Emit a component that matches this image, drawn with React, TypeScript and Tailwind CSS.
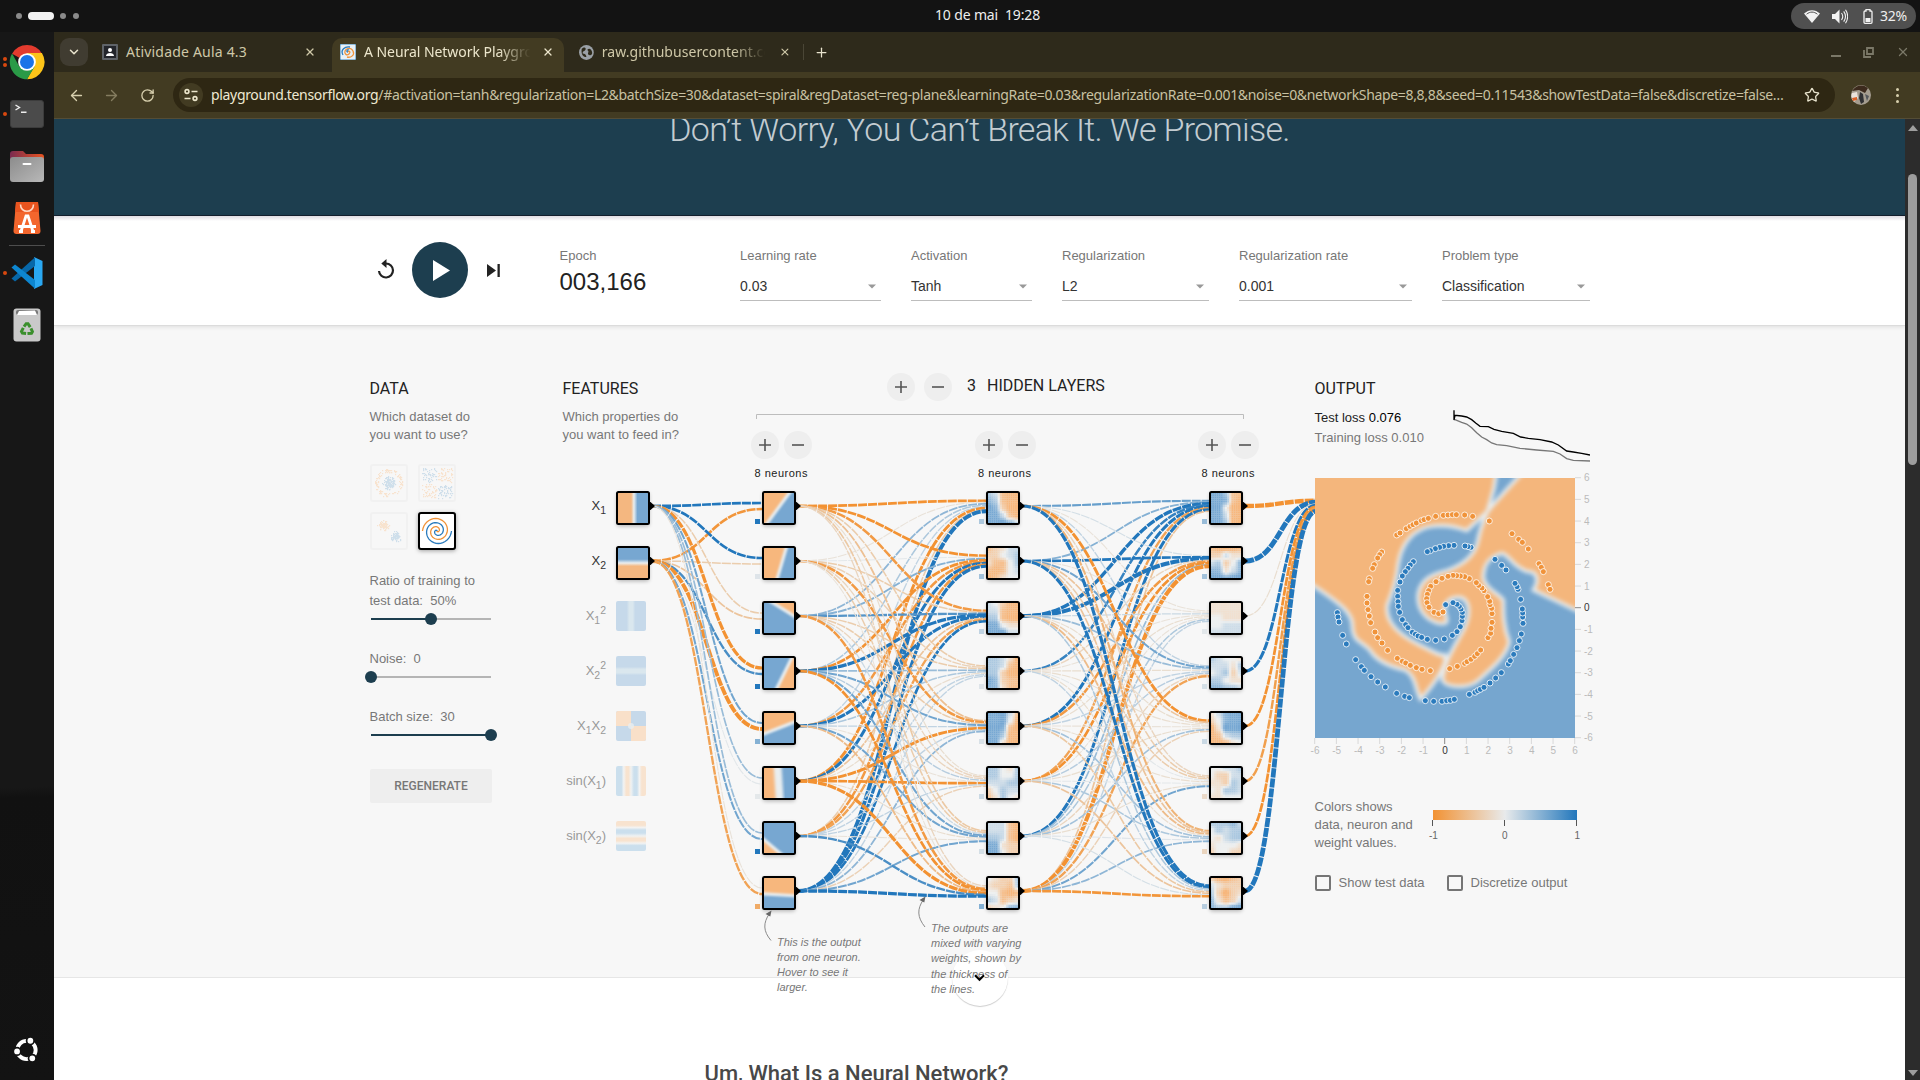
import React from "react";
import { ArrowLeft, ArrowRight, ChevronDown, Plus, RotateCw, Star, X } from "lucide-react";

const ORANGE = "#f4b780";
const BLUE = "#77a7d1";
const MID = "#e9eef0";

function mix(a: number[], b: number[], t: number) {
  return `rgb(${a.map((v, i) => Math.round(v + (b[i] - v) * t)).join(",")})`;
}
function linkColor(w: number) {
  const t = Math.min(1, Math.abs(w));
  return w < 0 ? mix([232, 230, 226], [243, 146, 50], t) : mix([232, 234, 235], [34, 119, 188], t);
}
function heatColor(d: number) {
  return d < 4 ? mix([238, 240, 240], [247, 183, 125], (4 - d) / 4) : mix([238, 240, 240], [119, 168, 211], (d - 4) / 4);
}

const ROW = (i: number) => 506 + 55 * i;
const COLS = [631, 777, 1001, 1224];

const W1 = [
  [1, 1, -0.3, -1.3, 0.6, 0.4, 0.4, -0.05],
  [-0.95, -0.3, -0.4, 0.8, -1.7, 0.03, 0.6, -0.8],
];
const W2 = [
  [-1, -1, -0.9, -0.3, -0.45, -0.1, -0.35, -0.2],
  [-0.05, 0.02, -0.3, -0.25, -0.9, -0.2, -0.3, -0.05],
  [0.45, 0.5, 0.75, -0.3, -0.3, -0.2, 0.15, -0.9],
  [0.3, -1, 1.3, 0.4, 0.6, 0.25, 0.6, -1],
  [0.2, -0.9, 1.2, 0.3, 0.2, -0.05, 0.6, -0.5],
  [-1.1, 1.2, -0.4, -0.1, -1.1, -1, -0.1, -1.3],
  [-0.3, -0.9, -0.8, 0.2, 0.2, 0.2, -0.05, 0.8],
  [1.7, 1.3, 1, 0.2, 0.45, -0.25, 0.6, 1.3],
];
const W3 = [
  [0.65, 0.1, -0.05, 0.2, -1.1, -0.2, -0.6, 1.3],
  [0.5, 1, -0.05, 0.6, -0.4, -0.3, -0.4, 1.2],
  [1.4, 1.8, 0.15, 0.4, -0.1, -0.3, -0.5, 0.3],
  [0.9, -0.2, -0.05, -0.1, -0.1, 0.03, -0.1, 0.2],
  [1.2, -0.9, -0.1, 0.2, -0.05, -0.1, 0.35, -0.35],
  [-0.8, -1, -0.05, 0.25, -0.1, 0.02, 0.3, -0.4],
  [1.2, 0.4, 0.3, -0.2, 0.35, -0.1, 0.05, 0.1],
  [-0.4, -1.8, 0.2, -0.8, -0.25, 0.6, 0.45, -0.95],
];
const WOUT = [-2, 2.3, -0.1, 1.2, -1, -0.85, -1, 2.2];

const L1_SHAPES = [
  "-20,-20 90,-20 76,0 10,90 -5,110 -20,110",
  "-20,-20 72,-20 34,110 -20,110",
  "-5,-18 120,-18 120,60",
  "92,-20 120,-20 120,110 28,110",
  "-20,-20 110,-20 110,20 -20,70",
  "-20,-20 40,-20 48,110 -20,110",
  "-20,30 80,115 -20,110",
  "-20,-20 110,-20 110,54 -20,46",
];
const GRIDS = [
  [
    "65100 76100 87200 88510 88875",
    "12355 22456 31146 10145 01344",
    "54200 55100 66100 88433 88855",
    "66530 66510 66200 87211 77311",
    "88851 88840 88710 88600 88300",
    "66436 66446 55566 24655 13643",
    "55510 55510 66510 88322 88422",
    "43226 32216 44101 65123 23477",
  ],
  [
    "88611 88710 88400 88500 88600",
    "10001 22533 56247 77357 88788",
    "33333 33333 44333 44555 55555",
    "65443 55536 45625 66433 77665",
    "35788 24788 03888 01566 00134",
    "44556 42255 33265 43665 33444",
    "66675 46566 43566 34443 24422",
    "20012 53222 62023 73125 76688",
  ],
];

const CELLS = 15;

function fieldCells(data: string) {
  const rows = data.split(" ").map((r) => r.split("").map(Number));
  const out: { x: number; y: number; v: number }[] = [];
  const ease = (t: number) => t * t * (3 - 2 * t);
  for (let y = 0; y < CELLS; y++)
    for (let x = 0; x < CELLS; x++) {
      const fx = (x / (CELLS - 1)) * 4;
      const fy = (y / (CELLS - 1)) * 4;
      const x0 = Math.min(3, Math.floor(fx));
      const y0 = Math.min(3, Math.floor(fy));
      const tx = ease(fx - x0);
      const ty = ease(fy - y0);
      const top = rows[y0][x0] * (1 - tx) + rows[y0][x0 + 1] * tx;
      const bottom = rows[y0 + 1][x0] * (1 - tx) + rows[y0 + 1][x0 + 1] * tx;
      const v = top * (1 - ty) + bottom * ty;
      out.push({ x, y, v: Math.max(0, Math.min(8, 4 + (v - 4) * 1.12)) });
    }
  return out;
}

function Grid({ data }: { data: string }) {
  return (
    <g filter="url(#smooth)">
      <rect x="-10" y="-10" width="110" height="110" fill={MID} />
      {fieldCells(data).map(({ x, y, v }) => (
        <rect key={`${x},${y}`} x={x * 6} y={y * 6} width="6.3" height="6.3" fill={heatColor(v)} />
      ))}
    </g>
  );
}

function Link({ x1, y1, x2, y2, w }: { x1: number; y1: number; x2: number; y2: number; w: number }) {
  const m = (x1 + x2) / 2;
  return (
    <path
      d={`M${x1},${y1}C${m},${y1} ${m},${y2} ${x2},${y2}`}
      fill="none"
      stroke={linkColor(w)}
      strokeWidth={1 + Math.abs(w) * 1.7}
      strokeDasharray="9 1"
    />
  );
}

function Node({ x, y, children }: { x: number; y: number; children: React.ReactNode }) {
  return (
    <g>
      <path d={`M${x + 18},${y - 4}h1.5L${x + 24},${y}L${x + 19.5},${y + 4}h-1.5z`} fill="#000" />
      <rect x={x - 14} y={y - 13} width="32" height="33" rx="2" fill="#000" opacity="0.3" filter="url(#shade)" />
      <svg x={x - 14} y={y - 14} width="32" height="32" viewBox="0 0 90 90">
        {children}
      </svg>
      <rect x={x - 14} y={y - 14} width="32" height="32" rx="1.5" fill="none" stroke="#000" strokeWidth="2" />
    </g>
  );
}

function Diagram() {
  const links: React.ReactNode[] = [];
  [W1, W2, W3].forEach((ws, l) => {
    const n = ws.length;
    for (let d = 0; d < 8; d++)
      for (let s = 0; s < n; s++)
        links.push(
          <Link
            key={`${l}-${s}-${d}`}
            x1={COLS[l] + 21}
            y1={ROW(s)}
            x2={COLS[l + 1] - 15}
            y2={ROW(d) + ((s - (n - 1) / 2) / n) * 12}
            w={ws[s][d]}
          />
        );
  });
  WOUT.forEach((w, s) =>
    links.push(<Link key={`o${s}`} x1={1245} y1={ROW(s)} x2={1316} y2={506 + ((s - 3.5) / 8) * 12} w={w} />)
  );
  const bias = [
    [1, 0.05, 1, 1, 0.5, 0.02, 1, -0.7],
    [0.3, 0.35, 0.2, 0.05, 0.08, 0.15, 0.1, 0.5],
    [0.4, 0.35, 0.03, 0.1, 0.15, -0.15, -0.2, 0.25],
  ];
  return (
    <svg className="absolute left-0 top-0" width="752" height="652" viewBox="563 326 752 652">
      <defs>
        <filter id="soft" x="-20%" y="-20%" width="140%" height="140%" colorInterpolationFilters="sRGB">
          <feGaussianBlur stdDeviation="5" />
        </filter>
        <filter id="smooth" x="-10%" y="-10%" width="120%" height="120%" colorInterpolationFilters="sRGB">
          <feGaussianBlur stdDeviation="1.6" />
        </filter>
        <filter id="crisp" x="-30%" y="-30%" width="160%" height="160%" colorInterpolationFilters="sRGB">
          <feGaussianBlur stdDeviation="3" />
        </filter>
        <filter id="shade" x="-30%" y="-30%" width="160%" height="160%">
          <feGaussianBlur stdDeviation="2" />
        </filter>
        <linearGradient id="fx1">
          <stop offset="0.44" stopColor={ORANGE} />
          <stop offset="0.53" stopColor={MID} />
          <stop offset="0.64" stopColor={BLUE} />
        </linearGradient>
        <linearGradient id="fx2" x2="0" y2="1">
          <stop offset="0.38" stopColor={BLUE} />
          <stop offset="0.5" stopColor={MID} />
          <stop offset="0.6" stopColor={ORANGE} />
        </linearGradient>
        <linearGradient id="sq">
          <stop offset="0.36" stopColor="#c6d9ea" />
          <stop offset="0.44" stopColor="#dae7ee" />
          <stop offset="0.56" stopColor="#dae7ee" />
          <stop offset="0.64" stopColor="#c6d9ea" />
        </linearGradient>
        <linearGradient id="sq2" x2="0" y2="1" href="#sq" />
        <linearGradient id="sn">
          <stop offset="0" stopColor="#cbdfed" />
          <stop offset="0.18" stopColor="#cbdfed" />
          <stop offset="0.26" stopColor="#f3f3f2" />
          <stop offset="0.34" stopColor="#f8e3cf" />
          <stop offset="0.42" stopColor="#f8e3cf" />
          <stop offset="0.5" stopColor="#f0f2f2" />
          <stop offset="0.6" stopColor="#cbdfed" />
          <stop offset="0.7" stopColor="#cbdfed" />
          <stop offset="0.78" stopColor="#f3f3f2" />
          <stop offset="0.86" stopColor="#f8e3cf" />
        </linearGradient>
        <linearGradient id="sn2" x1="0" x2="0" y1="1" y2="0" href="#sn" />
      </defs>
      <path d="M756.5,419V414.5H1243.5V419" fill="none" stroke="#bdbdbd" />
      {links}
      <Node x={631} y={506}>
        <rect width="90" height="90" fill="url(#fx1)" />
      </Node>
      <Node x={631} y={561}>
        <rect width="90" height="90" fill="url(#fx2)" />
      </Node>
      <rect x="616" y="601" width="30" height="30" rx="2" fill="url(#sq)" />
      <rect x="616" y="656" width="30" height="30" rx="2" fill="url(#sq2)" />
      <g>
        <rect x="616" y="711" width="30" height="30" rx="2" fill="#c6d9ea" />
        <path d="M618,711h13v15h-15v-13q0-2 2-2zM631,726h15v13q0 2-2 2h-13z" fill="#f9e0c9" />
        <circle cx="631" cy="726" r="3" fill="#e9eef0" opacity="0.8" />
      </g>
      <rect x="616" y="766" width="30" height="30" rx="2" fill="url(#sn)" />
      <rect x="616" y="821" width="30" height="30" rx="2" fill="url(#sn2)" />
      {L1_SHAPES.map((p, i) => (
        <Node key={i} x={777} y={ROW(i)}>
          <rect width="90" height="90" fill={BLUE} />
          <g filter={i === 5 ? "url(#soft)" : "url(#crisp)"}>
            <polygon points={p} fill="#f7b77d" stroke={MID} strokeWidth={i === 5 ? 22 : 9} />
          </g>
        </Node>
      ))}
      {GRIDS.map((g, l) =>
        g.map((d, i) => (
          <Node key={`${l}-${i}`} x={COLS[l + 2]} y={ROW(i)}>
            <Grid data={d} />
          </Node>
        ))
      )}
      {bias.map((b, l) =>
        b.map((w, i) => <rect key={`${l}${i}`} x={COLS[l + 1] - 22} y={ROW(i) + 13} width="5" height="5" fill={linkColor(w)} />)
      )}
      <g fill="none" stroke="#8a8a8a">
        <path d="M771,940.5C763,931 763,923 769.5,913.5" />
        <path d="M925,927C917,917 917,909 923.5,899.5" />
      </g>
      <path d="M771.5,910.5l-6,3.4l4.8,2.6z M925.5,896.5l-6,3.4l4.8,2.6z" fill="#666" />
    </svg>
  );
}

function rand(seed: number) {
  let s = seed;
  const next = () => {
    s = (s * 16807) % 2147483647;
    return s / 2147483647;
  };
  for (let i = 0; i < 20; i++) next();
  return next;
}
const CIRCLE_DOTS = (() => {
  const r = rand(77);
  const a: number[][] = [];
  for (let i = 0; i < 130; i++) {
    const t = r() * 6.283;
    const k = r() * 6.8;
    a.push([18.5 + Math.cos(t) * k, 18.5 + Math.sin(t) * k, 1]);
  }
  for (let i = 0; i < 120; i++) {
    const t = r() * 6.283;
    const k = 10.5 + r() * 3.5;
    a.push([18.5 + Math.cos(t) * k, 18.5 + Math.sin(t) * k, 0]);
  }
  return a;
})();
const XOR_DOTS = (() => {
  const r = rand(991);
  const a: number[][] = [];
  for (let i = 0; i < 230; i++) {
    let x = (r() - 0.5) * 28;
    let y = (r() - 0.5) * 28;
    x += x > 0 ? 1 : -1;
    y += y > 0 ? 1 : -1;
    a.push([19 + x, 19 + y, x * y > 0 ? 1 : 0]);
  }
  return a;
})();
const GAUSS_DOTS = (() => {
  const r = rand(4242);
  const a: number[][] = [];
  for (let i = 0; i < 180; i++) {
    const b = i % 2;
    const g = () => (r() + r() + r() - 1.5) * 4.6;
    a.push([(b ? 25 : 13.5) + g(), (b ? 24 : 13) + g(), b]);
  }
  return a;
})();

function Thumb({ dots }: { dots: number[][] }) {
  return (
    <div className="h-[38px] w-[38px] overflow-hidden rounded-[3px] border-2 border-[#f1f1f1]">
      <svg width="34" height="34" viewBox="2 2 34 34">
        {dots.map(([x, y, b], i) => (
          <rect key={i} x={Math.round(x)} y={Math.round(y)} width="1.2" height="1.2" fill={b ? "#cfdfeb" : "#f8e3cf"} />
        ))}
      </svg>
    </div>
  );
}

function spiral(phase: number) {
  let d = "";
  for (let i = 0; i <= 60; i++) {
    const t = (i / 60) * 1.75 * 2 * Math.PI + phase;
    const k = (i / 60) * 14.5;
    d += `${i ? "L" : "M"}${(19 + k * Math.sin(t)).toFixed(2)},${(19 + k * Math.cos(t)).toFixed(2)}`;
  }
  return d;
}

const SPIRAL_A = spiral(0);
const SPIRAL_B = spiral(Math.PI);

function Slider({ pos }: { pos: number }) {
  return (
    <div className="relative flex h-4 w-[122px] items-center pl-px pr-px">
      <div className="h-[2px] bg-[#1d3e4f]" style={{ width: pos * 120 }} />
      <div className="h-[2px] flex-1 bg-[#b5b5b5]" />
      <div className="absolute h-3 w-3 rounded-full bg-[#1d3e4f]" style={{ left: pos * 120 - 5 }} />
    </div>
  );
}

function Round({ kind }: { kind: "plus" | "minus" }) {
  return (
    <div className="flex h-7 w-7 items-center justify-center rounded-full bg-[#eeeeee]">
      <svg width="12" height="12" viewBox="0 0 12 12" stroke="#555" strokeWidth="1.6">
        <path d={kind === "plus" ? "M0,6H12M6,0V12" : "M0,6H12"} />
      </svg>
    </div>
  );
}

function Select({ label, value, w }: { label: string; value: string; w: string }) {
  return (
    <div className={w}>
      <div className="text-[13px] leading-5 text-[#777]">{label}</div>
      <div className="mt-[5px] flex h-[30px] items-center justify-between border-b border-[#bdbdbd] pr-[5px] pt-[2px] text-[14px] text-[#333]">
        <span>{value}</span>
        <svg width="8" height="5" viewBox="0 0 8 5">
          <path d="M0,.5h8L4,4.5z" fill="#999" />
        </svg>
      </div>
    </div>
  );
}

const O_DOTS =
  "320,525;330,519;349,506;360,499;369,494;379,489;394,482;402,479;415,475;437,469;460,466;474,465;487,464;499,464;524,465;548,469;598,483;666,521;686,538;697,547;715,567;747,611;754,622;760,635;775,674;780,688;275,576;269,584;263,594;253,614;248,625;238,656;236,665;231,709;231,729;234,749;238,768;242,788;255,816;263,833;276,849;293,871;322,895;337,904;347,909;361,916;379,923;396,928;421,932;479,926;502,919;524,910;531,905;543,898;554,889;562,881;572,870;594,833;602,820;603,805;606,787;606,761;605,745;600,734;599,724;593,710;582,692;576,684;566,676;559,668;538,656;524,650;511,648;500,647;489,646;474,649;456,655;438,665;422,679;416,692;412,703;410,716;411,728;417,742;432,757;446,761;459,756";
const B_DOTS =
  "142,758;144,771;147,786;158,826;169,852;197,899;214,920;223,931;243,950;263,966;286,981;320,1000;344,1009;358,1013;406,1022;431,1024;456,1024;470,1022;481,1021;493,1018;538,1003;555,997;563,992;571,988;582,982;600,969;617,954;634,938;655,912;661,902;671,883;681,863;688,842;694,822;699,790;698,771;698,759;697,747;692,718;684,688;681,680;675,670;648,630;635,616;615,598;543,562;534,560;525,558;492,556;476,557;461,559;449,562;436,566;421,572;412,575;370,605;361,615;354,625;346,635;337,648;330,666;323,691;323,709;324,725;325,739;329,757;337,779;347,794;354,803;367,817;376,823;384,828;395,832;412,838;437,841;463,837;487,826;501,815;511,800;516,782;517,769;517,757;513,747;508,739;501,733;489,728;467,734";

function Heatmap() {
  const dots = (s: string, fill: string) =>
    s.split(";").map((p, i) => {
      const [x, y] = p.split(",");
      return <circle key={i} cx={x} cy={y} r="9" fill={fill} stroke="#fff" strokeOpacity="0.8" strokeWidth="3" />;
    });
  const ticks = Array.from({ length: 13 }, (_, i) => i);
  return (
    <svg className="mt-[16px] block overflow-visible" width="290" height="284" viewBox="0 0 290 284" fontFamily="Liberation Sans, sans-serif" fontSize="10">
      <svg width="260" height="260" viewBox="75 354 780 780">
        <defs>
          <filter id="edge" x="-10%" y="-10%" width="120%" height="120%" colorInterpolationFilters="sRGB">
            <feGaussianBlur stdDeviation="7" />
          </filter>
        </defs>
        <rect x="75" y="354" width="780" height="780" fill="#76a6cf" />
        <g filter="url(#edge)" fill="#f4b67c" stroke="#e8edef" strokeWidth="11">
          <path d="M40,300L625,300L612,385L592,455L530,512C500,500 460,495 430,498C370,505 335,550 325,610C320,660 310,690 292,735C285,790 330,825 380,850C420,870 450,890 465,885L466,905C450,950 420,985 392,1018C375,990 380,950 345,930C300,920 260,905 240,870C210,840 190,845 187,800C190,760 150,730 75,680L40,660Z" />
          <path d="M730,300L900,300L900,770L730,690C750,660 740,635 715,635C670,625 655,580 635,580C600,590 580,610 580,655C590,690 625,700 640,720C640,760 640,800 658,845C650,890 600,930 560,965C530,985 470,985 457,960C462,900 500,850 525,800C545,750 535,712 505,712C470,712 460,740 465,760C478,790 470,795 440,788C400,775 380,740 385,700C395,650 440,640 470,632C520,615 550,590 562,550C570,500 582,480 592,455C620,420 660,380 730,300Z" />
        </g>
        {dots(O_DOTS, "#f0933a")}
        {dots(B_DOTS, "#2b7bbd")}
      </svg>
      {ticks.map((i) => {
        const p = (i * 260) / 12;
        const zero = i === 6;
        return (
          <g key={i}>
            <path d={`M${p - 0.3},260v6`} stroke={zero ? "#888" : "#d8d8d8"} />
            <path d={`M260,${p - 0.3}h6`} stroke={zero ? "#888" : "#d8d8d8"} />
            <text x={p} y="276" textAnchor="middle" fill={zero ? "#333" : "#bbb"}>
              {i - 6}
            </text>
            <text x="269" y={p + 3.3} fill={zero ? "#333" : "#bbb"}>
              {6 - i}
            </text>
          </g>
        );
      })}
    </svg>
  );
}

function Check({ label }: { label: string }) {
  return (
    <div className="flex items-center">
      <div className="h-4 w-4 rounded-[2px] border-2 border-[#757575]" />
      <span className="ml-[7.5px] mr-[0.5px] text-[13px] text-[#777]">{label}</span>
    </div>
  );
}

function DockDot({ two = false }: { two?: boolean }) {
  return (
    <div className="flex w-[9px] flex-col items-end gap-[2px] pr-[2px]">
      <div className="h-1 w-1 rounded-full bg-[#d9480f]" />
      {two && <div className="h-1 w-1 rounded-full bg-[#d9480f]" />}
    </div>
  );
}

function Dock() {
  return (
    <div className="flex w-[54px] shrink-0 flex-col bg-[linear-gradient(178deg,#171717_0%,#171717_72%,#111_73%,#131313_100%)] pt-3">
      <div className="flex h-9 items-center">
        <DockDot two />
        <svg width="36" height="36" viewBox="0 0 48 48">
          <path d="M24,24L4.1,13A23,23 0 0 1 44,13z" fill="#e33b2e" />
          <path d="M24,12H43.9A23,23 0 0 1 24,47L33.5,30z" fill="#fcc419" />
          <path d="M4.1,12.5L13.8,30 24,35.5 34.4,30 24,47A23,23 0 0 1 4.1,12.5z" fill="#2a9a47" />
          <circle cx="24" cy="24" r="11.8" fill="#fff" />
          <circle cx="24" cy="24" r="9.3" fill="#1a73e8" />
        </svg>
      </div>
      <div className="mt-5 flex h-7 items-center">
        <DockDot />
        <div className="ml-px h-7 w-[34px] rounded-[3px] border border-[#3c3c3c] bg-[#4b4b4b]">
          <svg width="32" height="26" viewBox="0 0 32 26" stroke="#eee" fill="none" strokeWidth="1.4">
            <path d="M4.5,4l4,2.5-4,2.5M10,11.3h5.5" />
          </svg>
        </div>
      </div>
      <svg className="ml-[10px] mt-[23px]" width="34" height="31" viewBox="0 0 34 31">
        <defs>
          <linearGradient id="fold">
            <stop offset="0" stopColor="#7a2a50" />
            <stop offset="1" stopColor="#e95420" />
          </linearGradient>
          <linearGradient id="gray" x2="1" y2="1">
            <stop offset="0" stopColor="#8c8c8c" />
            <stop offset="1" stopColor="#b8b8b8" />
          </linearGradient>
        </defs>
        <path d="M0,3q0-3 3-3h10l3,3h15q3,0 3,3v10H0z" fill="url(#fold)" />
        <rect y="6" width="34" height="25" rx="3" fill="url(#gray)" />
        <rect x="12.5" y="12" width="9" height="2" rx="1" fill="#fff" />
      </svg>
      <svg className="ml-[13px] mt-5" width="28" height="32" viewBox="0 0 28 32">
        <path d="M3,0H25L27.5,29q0,3-3,3H3.5q-3,0-3-3z" fill="#f3662d" />
        <path d="M3,0H25L26,10H2z" fill="#e9541f" />
        <path d="M7.5,2.5c0,9 13,9 13,0" fill="none" stroke="#ffd9c6" strokeWidth="1.6" />
        <path d="M8,29.5L13,14h2L20,29.5M5,24.5H23M6,29.5h4M18,29.5h4" fill="none" stroke="#fff" strokeWidth="2.8" />
      </svg>
      <div className="ml-[9px] mt-[11px] h-px w-9 bg-[#4d4d4d]" />
      <div className="mt-[11px] flex h-8 items-center">
        <DockDot />
        <svg className="ml-[2px]" width="32" height="32" viewBox="0 0 32 32">
          <path d="M23,0L31.5,4V28L23,32z" fill="#2aa8f2" />
          <path d="M24,0.3V9L4,24.5L0.5,21.5z" fill="#0767a8" />
          <path d="M24,31.7V23L4,7.5L0.5,10.5z" fill="#0d86d0" />
        </svg>
      </div>
      <svg className="ml-[13px] mt-[19px]" width="28" height="34" viewBox="0 0 28 34">
        <rect x=".5" y=".5" width="27" height="33" rx="3" fill="#c9c9c9" />
        <rect x="3" y="2" width="22" height="5" rx="2" fill="#777" />
        <path d="M4,7L6,3l16-.5L24,7z" fill="#fff" />
        <g stroke="#3a8f2c" strokeWidth="3" fill="none" transform="translate(14 21.5)">
          <path d="M-3,-2.8L-.8,-5.8H1L3.2,-2.4" />
          <path d="M-3,-2.8L-.8,-5.8H1L3.2,-2.4" transform="rotate(120)" />
          <path d="M-3,-2.8L-.8,-5.8H1L3.2,-2.4" transform="rotate(240)" />
        </g>
      </svg>
      <svg className="mb-4 ml-[13px] mt-auto" width="27" height="28" viewBox="0 0 28 28">
        <circle cx="14" cy="14" r="9.5" fill="none" stroke="#fff" strokeWidth="4" />
        <g stroke="#131313" strokeWidth="1.8" fill="#fff">
          <circle cx="4.2" cy="15.5" r="3.9" />
          <circle cx="18" cy="4.4" r="3.9" />
          <circle cx="20" cy="22.6" r="3.9" />
        </g>
      </svg>
    </div>
  );
}

function Browser() {
  return (
    <div className="shrink-0 font-['Noto_Sans',sans-serif] text-[#cfc8a8]">
      <div className="flex h-10 items-start bg-[#2e2a1b]">
        <div className="ml-[6px] mt-[6px] flex h-7 w-7 items-center justify-center rounded-[9px] bg-[#403c31]">
          <ChevronDown size={14} strokeWidth={2.6} color="#e8e3cd" />
        </div>
        <div className="ml-[14px] flex h-10 w-[230px] items-center">
          <svg width="16" height="16" viewBox="0 0 16 16">
            <rect width="16" height="16" rx="1" fill="#5f6368" />
            <rect x="2" y="2" width="12" height="12" fill="#23252b" />
            <circle cx="8" cy="6" r="2" fill="#fff" />
            <path d="M4,12c0-4 8-4 8,0z" fill="#fff" />
          </svg>
          <span className="-mt-[2px] ml-2 whitespace-nowrap text-[14px] tracking-[0.2px]">Atividade Aula 4.3</span>
          <X className="ml-auto mr-[16px]" size={12} strokeWidth={2.4} />
        </div>
        <div className="mt-[6px] flex h-[34px] w-[232px] items-center rounded-t-[10px] bg-[#423b22] pb-[6px] pl-2 text-[#ece6cc]">
          <svg width="16" height="16" viewBox="0 0 16 16">
            <rect width="16" height="16" rx="1" fill="#e8f0f5" stroke="#3b85bd" />
            <path d="M8,8c1-2 3,0 1,2s-5,0-4-3 6-4 8,0-2,7-6,6" fill="none" stroke="#f0933a" strokeWidth="1.3" />
            <path d="M8,8c-2,0-1-3 1-2M3,11C0,6 5,2 10,3" fill="none" stroke="#2b7bbd" strokeWidth="1.3" />
          </svg>
          <span className="-mt-[2px] ml-2 w-[168px] overflow-hidden whitespace-nowrap text-[14px] tracking-[-0.05px] [mask-image:linear-gradient(90deg,#000_80%,transparent_99%)]">
            A Neural Network Playground
          </span>
          <X className="ml-auto mr-[10px]" size={12} strokeWidth={2.6} />
        </div>
        <div className="flex h-10 w-[240px] items-center pl-[15px]">
          <svg width="15" height="15" viewBox="0 0 16 16">
            <circle cx="8" cy="8" r="8" fill="#9aa0a6" />
            <path d="M3,4c3-3 5-1 4,1s-3,1-3,4c2,0 4,1 4,4-4,0-6-4-5-9zM9,5c2-2 4-1 5,2s-1,4-2,4-3-1-2-3-1-2-1-3z" fill="#2e2a1b" />
          </svg>
          <span className="-mt-[2px] ml-2 w-[168px] overflow-hidden whitespace-nowrap text-[14px] tracking-[0.05px] [mask-image:linear-gradient(90deg,#000_80%,transparent_99%)]">
            raw.githubusercontent.com
          </span>
          <X className="ml-[12px]" size={12} strokeWidth={2.4} />
          <div className="ml-3 h-4 w-px bg-[#4a4636]" />
        </div>
        <div className="flex h-10 flex-1 items-center pl-[10px]">
          <Plus size={15} strokeWidth={2} color="#e8e3cd" />
          <div className="ml-auto flex items-center gap-[22px] pr-[10px] text-[#7b7868]">
            <div className="mt-2 h-[2px] w-[10px] bg-[#7b7868]" />
            <svg width="11" height="11" viewBox="0 0 11 11" fill="none" stroke="#7b7868" strokeWidth="1.8">
              <path d="M1,3V10H8M4,1h6v6H4z" />
            </svg>
            <X size={14} strokeWidth={2.2} />
          </div>
        </div>
      </div>
      <div className="flex h-[46px] items-center bg-[#423b22]">
        <ArrowLeft className="ml-[14px]" size={17} strokeWidth={1.9} color="#d8d0ae" />
        <ArrowRight className="ml-[18px]" size={17} strokeWidth={1.9} color="#857d60" />
        <RotateCw className="ml-[20px]" size={15} strokeWidth={2.1} color="#d8d0ae" />
        <div className="ml-[18px] flex h-[34px] w-[1662px] items-center rounded-full bg-[#2e2713] pl-[6px]">
          <div className="flex h-6 w-6 items-center justify-center rounded-full bg-[#423b22]">
            <svg width="14" height="14" viewBox="0 0 14 14" fill="none" stroke="#ece6cc" strokeWidth="1.6">
              <circle cx="3" cy="3.5" r="1.9" />
              <path d="M7.5,3.5H13.5M.5,10.5H6.5" />
              <circle cx="11" cy="10.5" r="1.9" />
            </svg>
          </div>
          <span className="-mt-[2px] ml-2 w-[1580px] whitespace-nowrap text-[14px] tracking-[-0.33px] text-[#c8c1a2]">
            <span className="text-[#efe9d2]">playground.tensorflow.org</span>
            /#activation=tanh&amp;regularization=L2&amp;batchSize=30&amp;dataset=spiral&amp;regDataset=reg-plane&amp;learningRate=0.03&amp;regularizationRate=0.001&amp;noise=0&amp;networkShape=8,8,8&amp;seed=0.11543&amp;showTestData=false&amp;discretize=false…
          </span>
          <Star className="ml-[13px]" size={16} strokeWidth={1.9} color="#e8e3cd" />
        </div>
        <svg className="ml-[16px]" width="20" height="20" viewBox="0 0 20 20">
          <circle cx="10" cy="10" r="10" fill="#a59d90" />
          <path d="M1,6Q8,-3 17,3L14,8 8,5z" fill="#3c2a1d" />
          <path d="M1,8l5-1 1,6-4,4q-4-4-2-9z" fill="#e9e2db" />
          <path d="M1,13l5-1v3l-4,1z" fill="#d9622a" />
          <path d="M9,7l3,2 1,8-3,2-2-6z" fill="#2f3033" />
          <path d="M14,9l4,2-2,5z" fill="#55585c" />
        </svg>
        <div className="ml-[25px] flex flex-col gap-[3px]">
          <div className="h-[3px] w-[3px] rounded-full bg-[#d8d0ae]" />
          <div className="h-[3px] w-[3px] rounded-full bg-[#d8d0ae]" />
          <div className="h-[3px] w-[3px] rounded-full bg-[#d8d0ae]" />
        </div>
      </div>
      <div className="h-px bg-[#544d36]" />
    </div>
  );
}

const LABEL = "absolute right-[709px] whitespace-nowrap text-[13px] leading-5";

function Sub({ children }: { children: string }) {
  return <span className="relative top-[4px] text-[10.5px]">{children}</span>;
}
function Sup({ children }: { children: string }) {
  return <span className="relative top-[-6px] text-[10.5px]">{children}</span>;
}

export default function App() {
  return (
    <div className="flex h-[1080px] w-[1920px] flex-col overflow-hidden bg-[#131313] font-['Liberation_Sans',Arial,sans-serif]">
      <header className="flex h-8 shrink-0 items-center font-['Noto_Sans',sans-serif] text-[14px] text-[#eee]">
        <div className="flex w-[935px] items-center gap-[6px] pl-4">
          <div className="h-[6px] w-[6px] rounded-full bg-[#8a8a8a]" />
          <div className="h-2 w-[26px] rounded-full bg-[#f2f2f2]" />
          <div className="h-[6px] w-[6px] rounded-full bg-[#8a8a8a]" />
          <div className="ml-[1px] h-[6px] w-[6px] rounded-full bg-[#8a8a8a]" />
        </div>
        <div className="-mt-[3px] whitespace-pre tracking-[-0.15px]">10 de mai  19:28</div>
        <div className="flex flex-1 justify-end pr-[4px]">
          <div className="flex h-[26px] w-[125px] items-center rounded-full bg-[#505050] pl-[13px]">
            <svg width="16" height="13" viewBox="0 0 16 13">
              <path d="M8,13L0,3.6C5,-1 11,-1 16,3.6z" fill="#f2f2f2" />
              <path d="M2.6,4.2C6,1.4 10,1.4 13.4,4.2" stroke="#505050" strokeWidth="1" fill="none" />
            </svg>
            <svg className="ml-[12px]" width="16" height="15" viewBox="0 0 16 15">
              <path d="M0,5h3l4.5-4.5v14L3,10H0z" fill="#f2f2f2" />
              <path d="M9.5,4q2.5,3.5 0,7M11.7,2.4q3.6,5 0,10.2M13.5,.8q4.4,6.7 0,13.4" fill="none" stroke="#f2f2f2" strokeWidth="1.1" />
            </svg>
            <svg className="ml-[15px]" width="10" height="15" viewBox="0 0 10 15">
              <path d="M1,3q0-1 1-1h1V.7h4V2h1q1,0 1,1v10.3q0,1-1,1H2q-1,0-1-1z" fill="none" stroke="#f2f2f2" strokeWidth="1.3" />
              <rect x="2.5" y="9" width="5" height="4" fill="#f2f2f2" />
            </svg>
            <span className="-mt-px ml-[7px] tracking-[-0.2px]">32%</span>
          </div>
        </div>
      </header>
      <div className="flex min-h-0 flex-1">
        <Dock />
        <div className="flex min-w-0 flex-1 flex-col">
          <Browser />
          <div className="flex min-h-0 flex-1">
            <main className="flex w-[1851px] flex-col overflow-hidden bg-white">
              <div className="flex h-[97px] shrink-0 justify-center overflow-hidden border-b border-[#14202f] bg-[#1d3e4f]">
                <h1 className="-mt-[11px] whitespace-nowrap font-['Roboto',sans-serif] text-[34px] font-light leading-[42px] tracking-[-0.68px] text-[#c3ccd1]">
                  Don’t Worry, You Can’t Break It. We Promise.
                </h1>
              </div>
              <div className="z-10 flex h-[110px] shrink-0 border-b border-[#dcdcdc] bg-[linear-gradient(#e0dde2,#fff_5px)] shadow-[0_1px_4px_rgba(0,0,0,0.1)]">
                <div className="ml-[323px] flex h-[108px] items-center">
                  <svg className="-mt-[2px]" width="18" height="20" viewBox="0 0 18 20">
                    <path d="M2,12A7,7 0 1 0 9,4.5H7" fill="none" stroke="#222" strokeWidth="2.2" />
                    <path d="M9.5,0V9L4.3,4.5z" fill="#222" />
                  </svg>
                  <div className="ml-[17px] flex h-14 w-14 items-center justify-center rounded-full bg-[#1d3e4f]">
                    <svg className="ml-[3px]" width="17" height="21" viewBox="0 0 17 21">
                      <path d="M0,0L17,10.5 0,21z" fill="#fff" />
                    </svg>
                  </div>
                  <svg className="ml-[19px]" width="13" height="13" viewBox="0 0 13 13">
                    <path d="M0,0L9,6.5 0,13zM10.5,0h2.3v13h-2.3z" fill="#222" />
                  </svg>
                </div>
                <div className="ml-[59.5px] mt-[30px] w-[180.5px]">
                  <div className="text-[13px] leading-5 text-[#777]">Epoch</div>
                  <div className="mt-[2px] text-[24px] leading-7 text-[#222]">003,166</div>
                </div>
                <div className="mt-[30px] flex gap-[30px]">
                  <Select label="Learning rate" value="0.03" w="w-[141px]" />
                  <Select label="Activation" value="Tanh" w="w-[121px]" />
                  <Select label="Regularization" value="L2" w="w-[147px]" />
                  <Select label="Regularization rate" value="0.001" w="w-[173px]" />
                  <Select label="Problem type" value="Classification" w="w-[148px]" />
                </div>
              </div>
              <section className="flex h-[652px] shrink-0 border-b border-[#e6e6e6] bg-[#f7f7f7] pl-[316px]">
                <div className="w-[193px] pt-[53px] text-[13px] text-[#777]">
                  <h2 className="-ml-[0.5px] font-['Roboto',sans-serif] text-[16px] leading-5 text-[#222]">DATA</h2>
                  <p className="-ml-[0.5px] mt-[9px] leading-[18px]">
                    Which dataset do
                    <br />
                    you want to use?
                  </p>
                  <div className="mt-5 grid w-[86px] grid-cols-2 gap-[10px]">
                    <Thumb dots={CIRCLE_DOTS} />
                    <Thumb dots={XOR_DOTS} />
                    <Thumb dots={GAUSS_DOTS} />
                    <div className="h-[38px] w-[38px] rounded-[3px] border-2 border-black bg-white shadow-[0_1px_4px_rgba(0,0,0,0.35)]">
                      <svg width="34" height="34" viewBox="2 2 34 34" fill="none" strokeWidth="1.3">
                        <path d={SPIRAL_A} stroke="#f0933a" />
                        <path d={SPIRAL_B} stroke="#2b7bbd" />
                      </svg>
                    </div>
                  </div>
                  <p className="-ml-[0.5px] mt-[21px] whitespace-pre leading-5">
                    Ratio of training to{"\n"}test data:  50%
                  </p>
                  <Slider pos={0.5} />
                  <p className="-ml-[0.5px] mt-[22px] whitespace-pre leading-5">Noise:  0</p>
                  <Slider pos={0} />
                  <p className="-ml-[0.5px] mt-[22px] whitespace-pre leading-5">Batch size:  30</p>
                  <Slider pos={1} />
                  <div className="mt-[26px] flex h-[34px] w-[122px] items-center justify-center rounded-[2px] bg-[#eeeeee] font-['Roboto',sans-serif] text-[12px] font-medium">
                    REGENERATE
                  </div>
                </div>
                <div className="relative flex w-[752px] text-[13px] text-[#777]">
                  <Diagram />
                  <div className="-ml-[0.5px] pt-[53px]">
                    <h2 className="font-['Roboto',sans-serif] text-[16px] leading-5 text-[#222]">FEATURES</h2>
                    <p className="mt-[9px] leading-[18px]">
                      Which properties do
                      <br />
                      you want to feed in?
                    </p>
                  </div>
                  <div className={`${LABEL} top-[170px] text-[#333]`}>X<Sub>1</Sub></div>
                  <div className={`${LABEL} top-[225px] text-[#333]`}>X<Sub>2</Sub></div>
                  <div className={`${LABEL} top-[280px] text-[#999]`}>X<Sub>1</Sub><Sup>2</Sup></div>
                  <div className={`${LABEL} top-[335px] text-[#999]`}>X<Sub>2</Sub><Sup>2</Sup></div>
                  <div className={`${LABEL} top-[390px] text-[#999]`}>X<Sub>1</Sub>X<Sub>2</Sub></div>
                  <div className={`${LABEL} top-[445px] text-[#999]`}>sin(X<Sub>1</Sub>)</div>
                  <div className={`${LABEL} top-[500px] text-[#999]`}>sin(X<Sub>2</Sub>)</div>
                  <div className="absolute left-[324px] top-[47px] flex items-center gap-[9px]">
                    <Round kind="plus" />
                    <Round kind="minus" />
                    <span className="-mt-[3px] whitespace-pre pl-[6px] font-['Roboto',sans-serif] text-[16px] text-[#222]">3</span>
                    <span className="-mt-[3px] pl-[2px] font-['Roboto',sans-serif] text-[16px] text-[#222]">HIDDEN LAYERS</span>
                  </div>
                  {[188, 411.5, 635].map((x) => (
                    <div key={x} className="absolute top-[105px]" style={{ left: x }}>
                      <div className="flex gap-[5px]">
                        <Round kind="plus" />
                        <Round kind="minus" />
                      </div>
                      <div className="mt-[4px] pl-[3.5px] text-[11px] leading-5 tracking-[0.5px] text-[#222]">8 neurons</div>
                    </div>
                  ))}
                  <div className="absolute left-[214px] top-[609px] whitespace-nowrap text-[11px] italic leading-[15px]">
                    This is the output
                    <br />
                    from one neuron.
                    <br />
                    Hover to see it
                    <br />
                    larger.
                  </div>
                  <div className="absolute left-[389px] top-[624px] h-14 w-14 rounded-full bg-white shadow-[0_1px_1px_rgba(0,0,0,0.2)]" />
                  <div className="absolute left-[368px] top-[595px] whitespace-nowrap text-[11px] italic leading-[15.2px]">
                    The outputs are
                    <br />
                    mixed with varying
                    <br />
                    weights, shown by
                    <br />
                    the thickness of
                    <br />
                    the lines.
                  </div>
                  <svg className="absolute left-[411px] top-[648px]" width="11" height="8" viewBox="0 0 11 8">
                    <path d="M1,1.2L5.5,5.8 10,1.2" fill="none" stroke="#000" strokeWidth="2" />
                  </svg>
                </div>
                <div className="relative w-[290px] pt-[53px] text-[13px] text-[#777]">
                  <h2 className="-ml-[0.5px] font-['Roboto',sans-serif] text-[16px] leading-5 text-[#222]">OUTPUT</h2>
                  <div className="mt-[8px] flex h-[55px]">
                    <div className="-ml-[0.5px] w-[138.5px] leading-5">
                      <div className="mt-px text-[#222]">
                        Test loss <span className="text-black">0.076</span>
                      </div>
                      <div>Training loss 0.010</div>
                    </div>
                    <svg className="mt-[3px]" width="137" height="52" viewBox="489 150 411 156" fill="none" strokeWidth="4">
                      <path
                        d="M493,178L515,187 530,192 545,203 560,218 575,231 590,239 605,249 620,254 650,257 690,265 740,270 790,274 810,282 830,296 850,301 900,303"
                        stroke="#777"
                      />
                      <path
                        d="M492,151V180L495,166 515,168 530,171 545,179 558,190 570,199 595,200 612,208 635,214 670,220 692,231 715,235 750,239 785,246 805,255 830,273 850,276 875,280 900,285"
                        stroke="#000"
                      />
                    </svg>
                  </div>
                  <Heatmap />
                  <div className="mt-[36px] flex">
                    <p className="-ml-[0.5px] w-[118.5px] leading-[18px]">
                      Colors shows
                      <br />
                      data, neuron and
                      <br />
                      weight values.
                    </p>
                    <div className="mt-[12px] w-[144px]">
                      <div className="h-[10px] bg-[linear-gradient(90deg,#f29233,#e8eaeb,#2277bc)]" />
                      <div className="flex h-[6px] justify-between">
                        <div className="-ml-px h-full w-px bg-[#555]" />
                        <div className="h-full w-px bg-[#555]" />
                        <div className="h-full w-px bg-[#555]" />
                      </div>
                      <div className="-ml-[4px] -mr-[3px] mt-[4px] flex justify-between text-[10px] leading-3 text-[#666]">
                        <span>-1</span>
                        <span className="-ml-[3px]">0</span>
                        <span>1</span>
                      </div>
                    </div>
                  </div>
                  <div className="mt-[21px] flex gap-[22px]">
                    <Check label="Show test data" />
                    <Check label="Discretize output" />
                  </div>
                </div>
              </section>
              <h2 className="ml-[650.5px] mt-[82px] whitespace-nowrap font-['Roboto',sans-serif] text-[22px] font-medium leading-7 text-[#484848]">
                Um, What Is a Neural Network?
              </h2>
            </main>
            <div className="flex flex-1 flex-col items-center bg-[#2c2c2c] pb-1 pt-[6px]">
              <svg width="10" height="6" viewBox="0 0 10 6">
                <path d="M0,6L5,0 10,6z" fill="#9e9e9e" />
              </svg>
              <div className="mt-[43px] h-[291px] w-[9px] rounded-full bg-[#9e9e9e]" />
              <svg className="mt-auto" width="10" height="6" viewBox="0 0 10 6">
                <path d="M0,0L5,6 10,0z" fill="#9e9e9e" />
              </svg>
            </div>
          </div>
        </div>
      </div>
    </div>
  );
}
